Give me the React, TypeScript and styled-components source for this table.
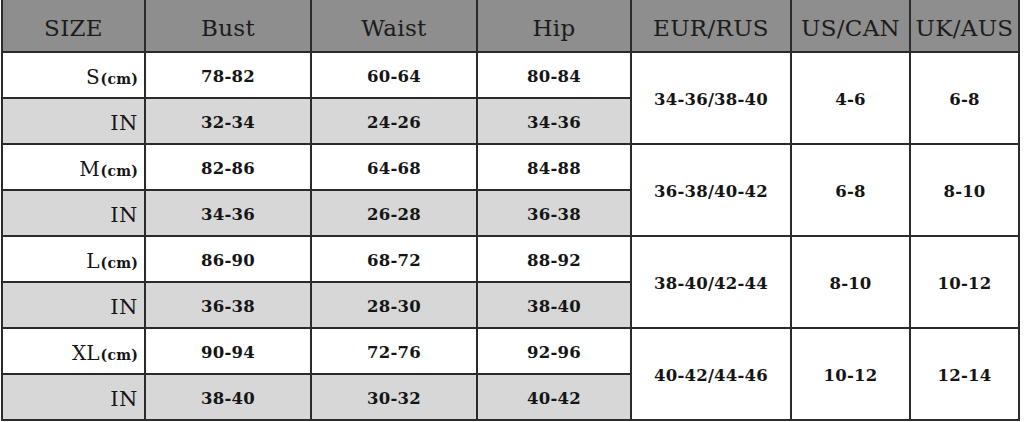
import { Fragment } from 'react';
import styled, { createGlobalStyle } from 'styled-components';

const GlobalStyle = createGlobalStyle`
  html, body {
    margin: 0;
    padding: 0;
    background: #ffffff;
  }
`;

const Chart = styled.div`
  display: grid;
  grid-template-columns: 143px 166px 166px 154px 160px 119px 109px;
  grid-template-rows: 53px repeat(8, 46px);
  width: max-content;
  margin-left: 1px;
  border-left: 2px solid #2b2b2b;
  font-family: 'DejaVu Serif', 'Liberation Serif', serif;
  color: #151515;
`;

const HeadCell = styled.div`
  display: flex;
  align-items: center;
  justify-content: center;
  padding-top: 4px;
  box-sizing: border-box;
  background: #8e8e8e;
  border-right: 2px solid #2b2b2b;
  border-bottom: 2px solid #2b2b2b;
  font-size: 23px;
  color: #1c1c1c;
  letter-spacing: 0.3px;
`;

const Cell = styled.div<{ $shade?: boolean; $span?: number }>`
  display: flex;
  align-items: center;
  justify-content: center;
  padding-top: 2px;
  box-sizing: border-box;
  background: ${(p) => (p.$shade ? '#d7d7d7' : '#ffffff')};
  border-right: 2px solid #2b2b2b;
  border-bottom: 2px solid #2b2b2b;
  grid-row: ${(p) => (p.$span ? `span ${p.$span}` : 'auto')};
  font-size: 16.5px;
  font-weight: 700;
  letter-spacing: 0.2px;
`;

const SizeCell = styled(Cell)`
  justify-content: flex-end;
  align-items: baseline;
  padding: 0 6px 0 0;
  line-height: 48px;
  font-weight: 400;
`;

const SizeName = styled.span<{ $big?: boolean }>`
  font-size: ${(p) => (p.$big ? '21px' : '20px')};
  font-weight: 400;
  letter-spacing: ${(p) => (p.$big ? '0.5px' : '0')};
`;

const Unit = styled.span`
  font-size: 14px;
  font-weight: 700;
  margin-left: 1px;
`;

const headers = ['SIZE', 'Bust', 'Waist', 'Hip', 'EUR/RUS', 'US/CAN', 'UK/AUS'];

const sizes = [
  { name: 'S', cm: ['78-82', '60-64', '80-84'], inch: ['32-34', '24-26', '34-36'], eur: '34-36/38-40', us: '4-6', uk: '6-8' },
  { name: 'M', cm: ['82-86', '64-68', '84-88'], inch: ['34-36', '26-28', '36-38'], eur: '36-38/40-42', us: '6-8', uk: '8-10' },
  { name: 'L', cm: ['86-90', '68-72', '88-92'], inch: ['36-38', '28-30', '38-40'], eur: '38-40/42-44', us: '8-10', uk: '10-12' },
  { name: 'XL', cm: ['90-94', '72-76', '92-96'], inch: ['38-40', '30-32', '40-42'], eur: '40-42/44-46', us: '10-12', uk: '12-14' },
];

function App() {
  return (
    <>
      <GlobalStyle />
      <Chart>
        {headers.map((h) => (
          <HeadCell key={h}>{h}</HeadCell>
        ))}
        {sizes.map((s) => (
          <Fragment key={s.name}>
            <SizeCell>
              <SizeName>{s.name}</SizeName>
              <Unit>(cm)</Unit>
            </SizeCell>
            {s.cm.map((v, i) => (
              <Cell key={'c' + i}>{v}</Cell>
            ))}
            <Cell $span={2}>{s.eur}</Cell>
            <Cell $span={2}>{s.us}</Cell>
            <Cell $span={2}>{s.uk}</Cell>
            <SizeCell $shade>
              <SizeName $big>IN</SizeName>
            </SizeCell>
            {s.inch.map((v, i) => (
              <Cell $shade key={'i' + i}>
                {v}
              </Cell>
            ))}
          </Fragment>
        ))}
      </Chart>
    </>
  );
}

export default App;
